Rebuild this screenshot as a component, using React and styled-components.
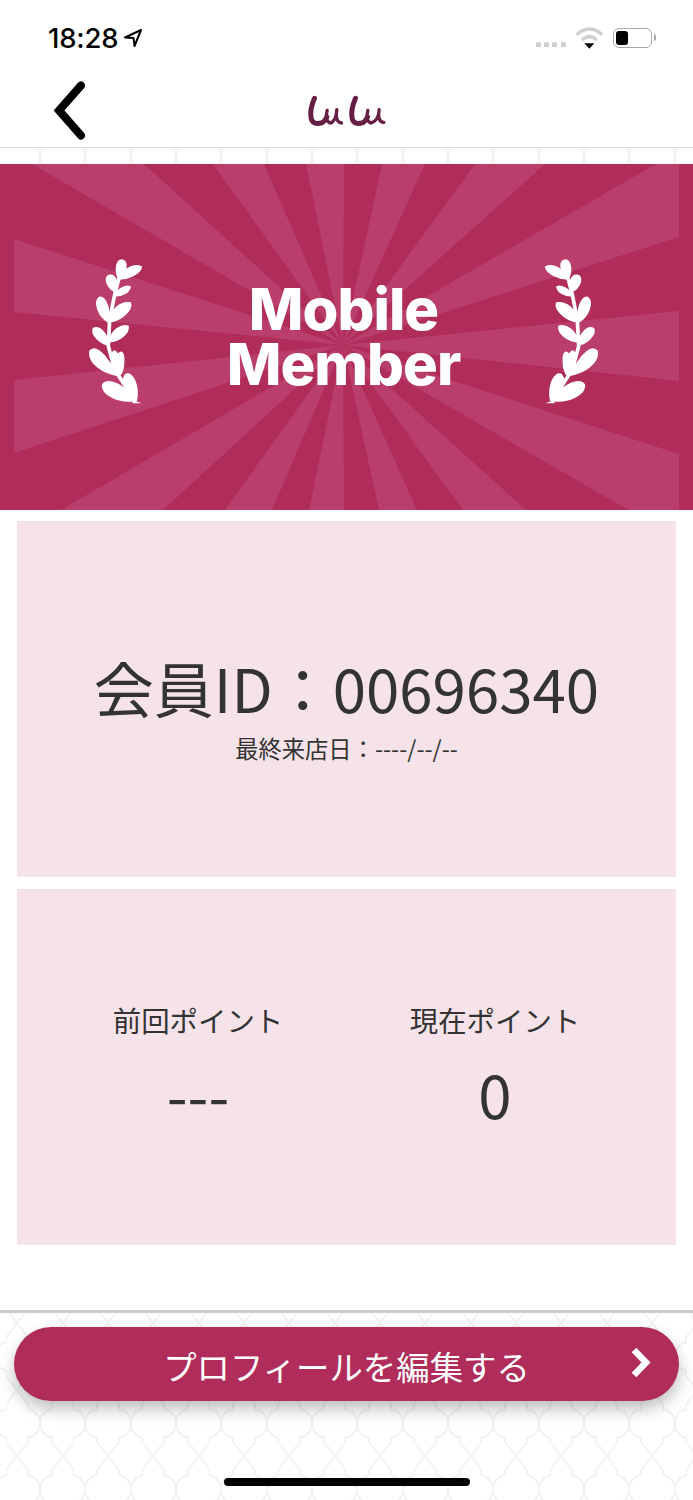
import React from "react";
import styled, { createGlobalStyle } from "styled-components";

const tile = encodeURIComponent(
  `<svg xmlns="http://www.w3.org/2000/svg" width="45.33" height="66.67" viewBox="0 0 45.33 66.67"><path d="M22.67 0 L33.7 14.6 V19.6 C40 19.6 45.33 26 45.33 33.33 C45.33 40.6 40 47 33.7 47 V52 L22.67 66.67 L11.6 52 V47 C5.3 47 0 40.6 0 33.33 C0 26 5.3 19.6 11.6 19.6 V14.6 Z" fill="none" stroke="#f1f1f1" stroke-width="1.8"/></svg>`
);

const Global = createGlobalStyle`
  html, body { margin: 0; padding: 0; background: #fff; }
  * { box-sizing: border-box; }
`;

const Page = styled.div`
  width: 693px;
  height: 1500px;
  overflow: hidden;
  display: flex;
  flex-direction: column;
  background-color: #fff;
  background-image: url("data:image/svg+xml,${tile}");
  background-position: 40px -10px;
  background-size: 45.33px 66.67px;
  font-family: "Noto Sans CJK JP", sans-serif;
  color: #333;
`;

const StatusBar = styled.div`
  height: 73px;
  flex: none;
  background: #fff;
  display: flex;
  align-items: center;
  justify-content: space-between;
  padding: 3px 41px 0 48px;
`;

const TimeGroup = styled.div`
  display: flex;
  align-items: center;
  gap: 5px;
`;

const Time = styled.span`
  font-family: Inter, sans-serif;
  font-weight: 550;
  font-size: 27.5px;
  line-height: 32px;
  letter-spacing: -0.2px;
  color: #000;
`;

const StatusIcons = styled.div`
  display: flex;
  align-items: center;
`;

const SignalDots = styled.div`
  display: flex;
  gap: 3.3px;
  margin: 13px 9px 0 0;
`;

const SignalDot = styled.i`
  display: block;
  width: 5px;
  height: 5px;
  border-radius: 1.5px;
  background: #cfcfcf;
`;

const Wifi = styled.svg`
  display: block;
  width: 28.33px;
  height: 22px;
  margin-right: 10px;
`;

const Battery = styled.div`
  width: 39px;
  height: 20px;
  border: 1.5px solid #a8a8a8;
  border-radius: 6px;
  padding: 2px;
  position: relative;
  &::after {
    content: "";
    position: absolute;
    right: -5px;
    top: 5px;
    width: 2.5px;
    height: 7px;
    border-radius: 0 2px 2px 0;
    background: #a8a8a8;
  }
`;

const BatteryLevel = styled.div`
  width: 12px;
  height: 100%;
  border-radius: 3px;
  background: #000;
`;

const NavBar = styled.header`
  height: 75px;
  flex: none;
  background: #fff;
  border-bottom: 1px solid #dcdcdc;
  display: grid;
  grid-template-columns: 1fr auto 1fr;
  align-items: center;
`;

const BackIcon = styled.svg`
  display: block;
  width: 40px;
  height: 60px;
  margin-left: 50px;
`;

const Logo = styled.svg`
  display: block;
  width: 110px;
  height: 50px;
`;

const Banner = styled.section`
  position: relative;
  height: 346px;
  margin-top: 16px;
  flex: none;
  background: #b02c5a;
  display: flex;
  align-items: center;
  justify-content: space-between;
  padding: 0 94px 0 88px;
`;

const Rays = styled.svg`
  position: absolute;
  inset: 0;
  width: 693px;
  height: 346px;
`;

const Wreath = styled.svg`
  position: relative;
  display: block;
  width: 55px;
  height: 146.67px;
  margin-bottom: 11px;
  transform: ${(p) => (p.$flip ? "scaleX(-1)" : "none")};
`;

const BannerTitle = styled.h1`
  position: relative;
  margin: 0;
  font-family: Inter, sans-serif;
  font-weight: 800;
  font-size: 58px;
  line-height: 55px;
  letter-spacing: -1px;
  text-align: center;
  color: #fff;
`;

const Panel = styled.main`
  height: 800px;
  flex: none;
  background: #fff;
  padding: 11px 17px 0;
  display: flex;
  flex-direction: column;
  gap: 12px;
`;

const Card = styled.div`
  height: 356px;
  background: #f6e3ea;
`;

const MemberCard = styled(Card)`
  padding-top: 124px;
  text-align: center;
`;

const MemberId = styled.div`
  font-size: 60px;
  line-height: 84px;
`;

const LastVisit = styled.div`
  font-size: 23.3px;
  line-height: 34px;
  margin-top: 2px;
`;

const PointsCard = styled(Card)`
  display: grid;
  grid-template-columns: 297px 297px;
  justify-content: center;
  padding-top: 111px;
`;

const PointColumn = styled.div`
  text-align: center;
`;

const PointLabel = styled.div`
  font-size: 28.4px;
  line-height: 40px;
`;

const PointValue = styled.div`
  font-size: 60px;
  line-height: 84px;
  margin-top: 11px;
`;

const Footer = styled.footer`
  flex: 1;
  border-top: 3px solid #cccccc;
  padding: 14px 14px 0;
  display: flex;
  flex-direction: column;
`;

const EditButton = styled.button`
  position: relative;
  width: 665px;
  height: 74px;
  border: 0;
  border-radius: 37px;
  background: #b02c5a;
  color: #fff;
  font-family: inherit;
  font-size: 33.4px;
  box-shadow: 0 8px 16px rgba(0, 0, 0, 0.25);
  padding: 2px 0 0;
`;

const ButtonChevron = styled.svg`
  position: absolute;
  right: 27px;
  top: 20px;
  width: 22px;
  height: 32px;
`;

const HomeBar = styled.div`
  width: 246px;
  height: 8px;
  border-radius: 4px;
  background: #000;
  margin: 77px auto 0;
`;

const leaves = [
  "M358 358C345 335 350 302 366 301C384 302 384 335 358 358Z",
  "M358 358C372 325 405 312 425 322C420 342 385 358 358 358Z",
  "M350 398C320 385 312 350 330 347C350 345 356 375 350 398Z",
  "M345 408C355 388 380 375 391 382C388 398 365 410 345 408Z",
  "M327 488C295 470 282 425 300 413C320 412 332 455 327 488Z",
  "M330 486C335 450 362 425 392 430C398 450 365 482 330 486Z",
  "M328 556C300 550 275 525 281 507C300 497 325 525 328 556Z",
  "M328 546C335 515 362 492 385 500C388 520 360 545 328 546Z",
  "M358 648C310 640 265 610 271 575C285 555 315 585 326 605Z",
  "M358 648C335 630 330 590 342 575C350 572 352 585 356 586C360 575 372 572 372 600C372 625 368 640 358 648Z",
  "M405 722C360 730 305 705 309 675C325 655 375 675 392 712Z",
  "M408 722C375 705 362 665 378 645C400 635 418 680 410 722Z",
  "M400 722L426 731L398 731Z",
];

const WreathIcon = ({ flip }) => (
  <Wreath $flip={flip} viewBox="265 295 165 440">
    <path
      d="M358 355L345 405L330 480L326 560L345 630L405 722"
      fill="none"
      stroke="#fff"
      strokeWidth="11"
    />
    {leaves.map((d, i) => (
      <path key={d} d={d} fill="#fff" stroke="#fff" strokeWidth={i === 12 ? 0 : 5} strokeLinejoin="round" />
    ))}
  </Wreath>
);

const rayPolygons = [
  [[32, 0], [144, 0]],
  [[213, 0], [264, 0]],
  [[306, 0], [344, 0]],
  [[382, 0], [425, 0]],
  [[475, 0], [545, 0]],
  [[656, 0], [679, 0], [679, 73]],
  [[14, 75], [14, 148]],
  [[679, 147], [679, 217]],
  [[14, 216], [14, 289]],
  [[679, 290], [679, 346], [628, 346]],
  [[163, 346], [61, 346]],
  [[272, 346], [225, 346]],
  [[344, 346], [309, 346]],
  [[417, 346], [379, 346]],
  [[526, 346], [463, 346]],
];

export default function App() {
  return (
    <Page>
      <Global />
      <StatusBar>
        <TimeGroup>
          <Time>18:28</Time>
          <svg width="20" height="20" viewBox="0 0 20 20">
            <path d="M2 9.500L18 2L11.500 18L10.500 10Z" fill="none" stroke="#000" strokeWidth="2" strokeLinejoin="round" />
          </svg>
        </TimeGroup>
        <StatusIcons>
          <SignalDots>
            <SignalDot />
            <SignalDot />
            <SignalDot />
            <SignalDot />
          </SignalDots>
          <Wifi viewBox="165 35 85 66">
            <path d="M170 58C195 36 221 36 246 58" fill="none" stroke="#cfcfcf" strokeWidth="10" />
            <path d="M186 74C200 61 216 61 230 74" fill="none" stroke="#cfcfcf" strokeWidth="10" />
            <path d="M193 84H223L208 100Z" fill="#000" />
          </Wifi>
          <Battery>
            <BatteryLevel />
          </Battery>
        </StatusIcons>
      </StatusBar>
      <NavBar>
        <BackIcon viewBox="0 0 40 60">
          <path d="M31 5.500L9 30.500L31 55.500" fill="none" stroke="#000" strokeWidth="8" strokeLinecap="round" strokeLinejoin="miter" />
        </BackIcon>
        <Logo viewBox="1.500 0 330 150">
          <g fill="none" stroke="#651f44" strokeLinecap="round" strokeLinejoin="round">
            <path d="M69 40C60 60 56 85 59 100C62 116 76 118 92 113C98 110 102 104 106 96" strokeWidth="15" />
            <path d="M107 76C103 92 104 110 116 114C126 112 132 100 135 86M136 74C132 90 134 112 150 114" strokeWidth="10" />
            <path d="M192 40C183 60 179 85 182 100C185 116 199 118 214 113C220 110 224 104 228 96" strokeWidth="15" />
            <path d="M229 76C225 92 226 110 238 114C250 112 258 100 262 86M263 74C259 90 261 112 277 112" strokeWidth="10" />
          </g>
        </Logo>
        <span />
      </NavBar>
      <Banner>
        <Rays viewBox="0 0 693 346">
          {rayPolygons.map((pts) => (
            <polygon
              key={pts.join()}
              points={`343,181 ${pts.map((p) => p.join(",")).join(" ")}`}
              fill="#b93e6b"
            />
          ))}
        </Rays>
        <WreathIcon />
        <BannerTitle>
          Mobile
          <br />
          Member
        </BannerTitle>
        <WreathIcon flip />
      </Banner>
      <Panel>
        <MemberCard>
          <MemberId>会員ID：00696340</MemberId>
          <LastVisit>最終来店日：----/--/--</LastVisit>
        </MemberCard>
        <PointsCard>
          <PointColumn>
            <PointLabel>前回ポイント</PointLabel>
            <PointValue>---</PointValue>
          </PointColumn>
          <PointColumn>
            <PointLabel>現在ポイント</PointLabel>
            <PointValue>0</PointValue>
          </PointColumn>
        </PointsCard>
      </Panel>
      <Footer>
        <EditButton>
          プロフィールを編集する
          <ButtonChevron viewBox="0 0 22 32">
            <path d="M4 3L16 15.500L4 28" fill="none" stroke="#fff" strokeWidth="6.500" />
          </ButtonChevron>
        </EditButton>
        <HomeBar />
      </Footer>
    </Page>
  );
}
